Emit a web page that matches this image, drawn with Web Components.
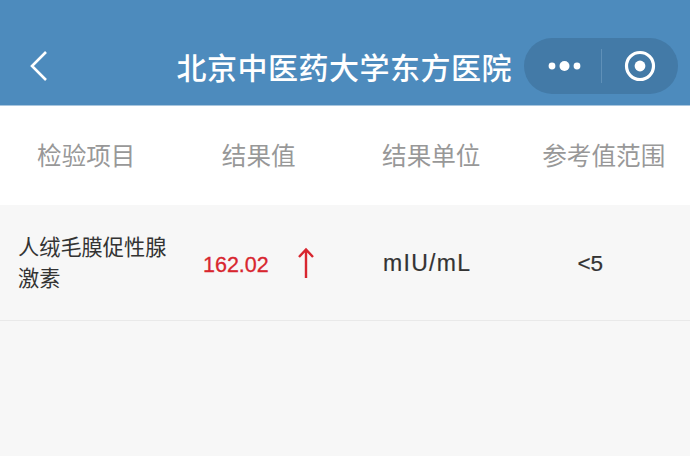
<!DOCTYPE html>
<html lang="zh">
<head>
<meta charset="utf-8">
<title>检验结果</title>
<style>
html, body { margin: 0; height: 100%; }
body { background: #f7f7f7; font-family: "Noto Sans CJK SC", "Liberation Sans", sans-serif; overflow: hidden; }
</style>
</head>
<body>
<nav-bar title="北京中医药大学东方医院"></nav-bar>
<result-header>
  <span>检验项目</span><span>结果值</span><span>结果单位</span><span>参考值范围</span>
</result-header>
<result-row name="人绒毛膜促性腺激素" value="162.02" unit="mIU/mL" range="&lt;5"></result-row>

<script>
// Top bar with back arrow and the mini program capsule
class NavBar extends HTMLElement {
  constructor() {
    super();
    this.attachShadow({ mode: 'open' }).innerHTML = `
      <style>
      :host {
        display: flex;
        align-items: center;
        box-sizing: border-box;
        height: 106px;
        padding: 26px 12px 0 28px;
        background: #4d8bbd;
        border-bottom: 1px solid #a9c6de;
        color: #fff;
      }
      .back { flex: none; display: block; }
      .title {
        flex: 1;
        text-align: right;
        padding-right: 12px;
        font-size: 30px;
        line-height: 40px;
        letter-spacing: 0.5px;
        font-weight: 500;
        white-space: nowrap;
      }
      .capsule {
        flex: none;
        display: flex;
        align-items: center;
        box-sizing: border-box;
        width: 154px;
        height: 56px;
        border-radius: 28px;
        background: #437aa7;
      }
      .more { width: 77px; padding-left: 4px; box-sizing: border-box; display: flex; justify-content: center; }
      .line { width: 1px; height: 34px; background: #5f90b8; }
      .target { flex: 1; display: flex; justify-content: center; }
      svg { display: block; }
      </style>
      <svg class="back" width="22" height="34" viewBox="0 0 22 34">
        <path d="M18 3 L4 17 L18 31" fill="none" stroke="#fff" stroke-width="2.6"/>
      </svg>
      <div class="title"></div>
      <div class="capsule">
        <div class="more">
          <svg width="36" height="12" viewBox="0 0 36 12" fill="#fff">
            <circle cx="5" cy="6" r="3.4"/><circle cx="17.5" cy="6" r="5"/><circle cx="30" cy="6" r="3.4"/>
          </svg>
        </div>
        <div class="line"></div>
        <div class="target">
          <svg width="32" height="32" viewBox="0 0 32 32">
            <circle cx="16" cy="16" r="13.5" fill="none" stroke="#fff" stroke-width="3.2"/>
            <circle cx="16" cy="16" r="5.4" fill="#fff"/>
          </svg>
        </div>
      </div>
    `;
    this.shadowRoot.querySelector('.title').textContent = this.getAttribute('title') || '';
  }
}

class ResultHeader extends HTMLElement {
  constructor() {
    super();
    this.attachShadow({ mode: 'open' }).innerHTML = `
      <style>
      :host {
        display: grid;
        grid-template-columns: repeat(4, 1fr);
        align-items: center;
        justify-items: center;
        box-sizing: border-box;
        height: 99px;
        padding-bottom: 4px;
        background: #fff;
        color: #989898;
        font-size: 24.6px;
        line-height: 36px;
        white-space: nowrap;
      }
      </style>
      <slot></slot>
    `;
  }
}

class ResultRow extends HTMLElement {
  constructor() {
    super();
    this.attachShadow({ mode: 'open' }).innerHTML = `
      <style>
      :host {
        display: grid;
        grid-template-columns: repeat(4, 1fr);
        align-items: center;
        box-sizing: border-box;
        height: 116px;
        border-bottom: 1px solid #e9e9e9;
        background: #f7f7f7;
        color: #333;
        font-family: "Liberation Sans", "Noto Sans CJK SC", sans-serif;
      }
      .name {
        padding: 0 6px 3px 18px;
        font-size: 21.2px;
        line-height: 31px;
        font-family: "Noto Sans CJK SC", sans-serif;
      }
      .value {
        display: flex;
        align-items: center;
        padding-left: 30.5px;
        color: #d8262f;
        font-size: 21.5px;
        -webkit-text-stroke: 0.3px #d8262f;
      }
      .num { margin-top: 6px; }
      .value svg { display: block; margin: 0 0 0 28px; }
      .unit { padding: 2px 0 0 38px; font-size: 23px; letter-spacing: 1.3px; -webkit-text-stroke: 0.2px #333; }
      .range { padding: 2px 27px 0 0; text-align: center; font-size: 22.5px; -webkit-text-stroke: 0.2px #333; }
      </style>
      <div class="name"></div>
      <div class="value">
        <span class="num"></span>
        <svg width="18" height="32" viewBox="0 0 18 32" fill="none" stroke="#d8262f" stroke-width="2.4">
          <path d="M9 31 V3 M2 10 L9 2.5 L16 10"/>
        </svg>
      </div>
      <div class="unit"></div>
      <div class="range"></div>
    `;
    const root = this.shadowRoot;
    root.querySelector('.name').textContent = this.getAttribute('name');
    root.querySelector('.num').textContent = this.getAttribute('value');
    root.querySelector('.unit').textContent = this.getAttribute('unit');
    root.querySelector('.range').textContent = this.getAttribute('range');
  }
}

customElements.define('nav-bar', NavBar);
customElements.define('result-header', ResultHeader);
customElements.define('result-row', ResultRow);
</script>
</body>
</html>
